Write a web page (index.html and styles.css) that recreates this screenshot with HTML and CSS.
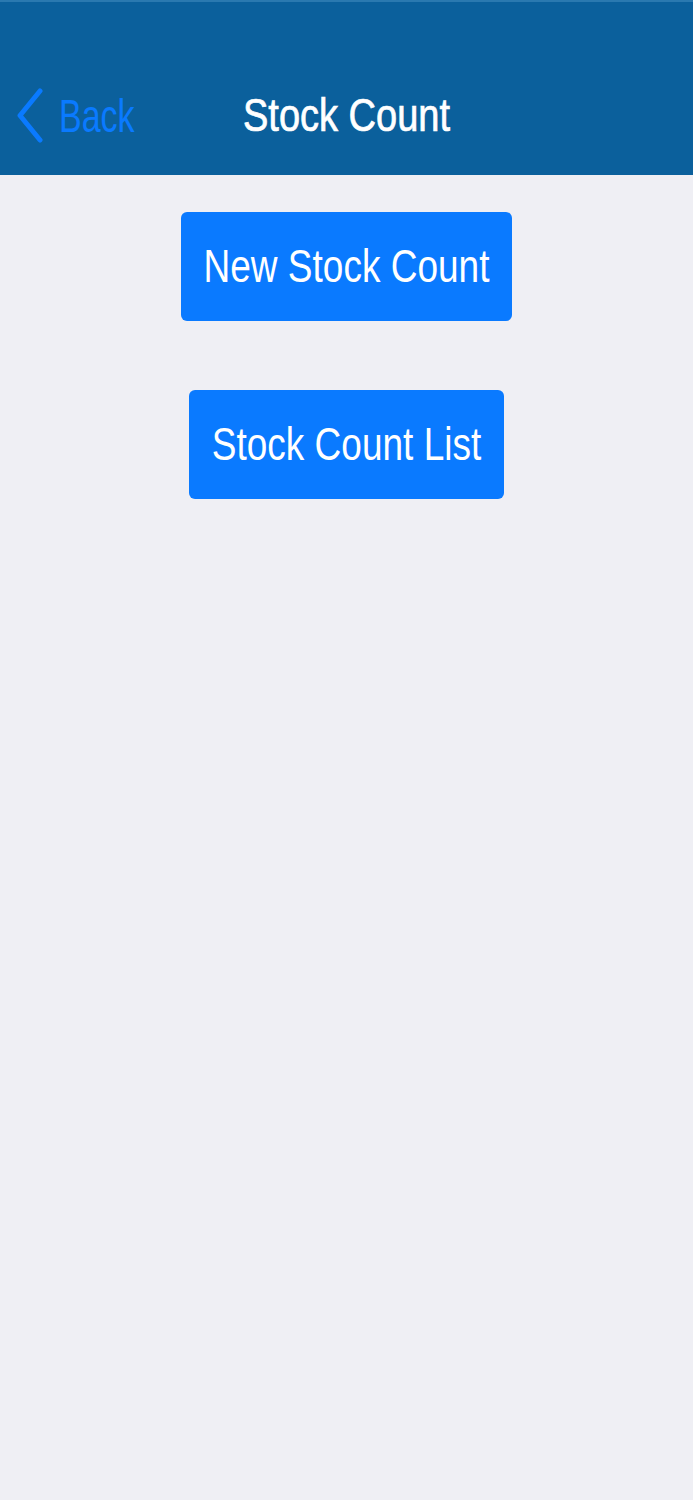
FILE: index.html
```html
<!DOCTYPE html>
<html lang="en">
<head>
    <meta charset="UTF-8">
    <meta name="viewport" content="width=device-width, initial-scale=1.0">
    <title>Stock Count</title>
    <link rel="stylesheet" href="styles.css">
</head>
<body>
    <div class="navbar">
        <a class="back" href="#">
            <svg class="chevron" width="30" height="56" viewBox="0 0 30 56">
                <polyline points="26,3 6,27.5 26,52" fill="none" stroke="#0a7aff" stroke-width="5" stroke-linecap="round" stroke-linejoin="round"/>
            </svg>
            <span class="back-text">Back</span>
        </a>
        <div class="title"><span>Stock Count</span></div>
        <div></div>
    </div>

    <div class="content">
        <button class="button"><span>New Stock Count</span></button>
        <button class="button"><span>Stock Count List</span></button>
    </div>
</body>
</html>
```

FILE: styles.css
```css
body {
    margin: 0;
    font-family: "Liberation Sans", Arial, sans-serif;
    background-color: #efeff4;
    min-height: 100vh;
}

.navbar {
    height: 175px;
    box-sizing: border-box;
    background-color: #0b609c;
    border-top: 2px solid #2a79b0;
    display: grid;
    grid-template-columns: 1fr auto 1fr;
    align-items: end;
    padding-bottom: 31px;
}

.back {
    display: flex;
    align-items: center;
    gap: 15px;
    padding-left: 14px;
    text-decoration: none;
    color: #0a7aff;
}

.back-text {
    display: inline-block;
    font-size: 34px;
    line-height: 56px;
    transform: scaleY(1.36);
}

.title {
    color: white;
    font-size: 38px;
    line-height: 56px;
    margin-bottom: 1px;
}

.title span {
    display: inline-block;
    transform: scaleY(1.22);
    -webkit-text-stroke: 0.6px white;
}

.content {
    display: flex;
    flex-direction: column;
    align-items: center;
    gap: 69px;
    padding-top: 37px;
}

.button {
    height: 109px;
    padding: 0 23px;
    border: none;
    border-radius: 6px;
    background-color: #0a7aff;
    color: white;
    font-family: "Liberation Sans", Arial, sans-serif;
    font-size: 37px;
    line-height: 44px;
    cursor: pointer;
}

.button span {
    display: inline-block;
    transform: scaleY(1.25);
}
```
